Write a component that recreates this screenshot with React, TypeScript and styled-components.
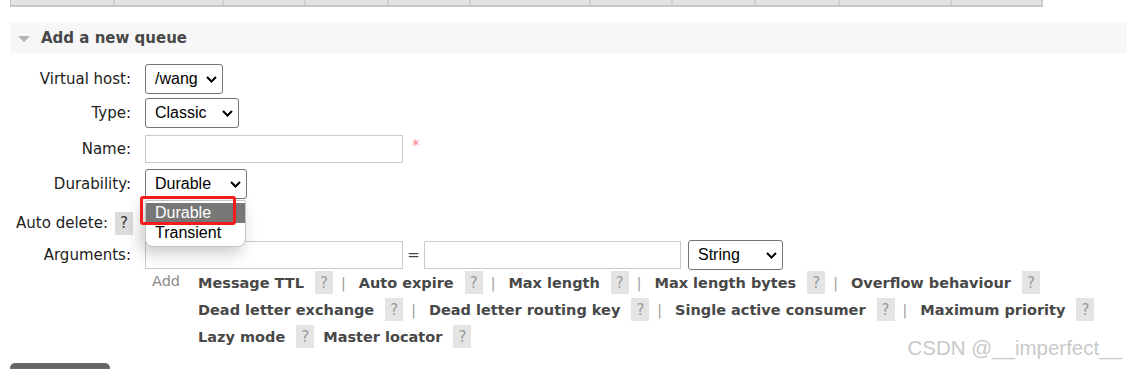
import React from 'react';
import styled, { createGlobalStyle } from 'styled-components';

const GlobalStyle = createGlobalStyle`
  html, body {
    margin: 0;
    padding: 0;
    background: #fff;
  }
  body {
    font-family: "DejaVu Sans", Verdana, sans-serif;
    color: #222;
    overflow: hidden;
  }
`;

const Page = styled.div`
  position: relative;
  width: 1127px;
  height: 369px;
  overflow: hidden;
`;

const TableStub = styled.div`
  display: flex;
  margin-left: 10px;
  height: 5px;
  width: fit-content;
  border-bottom: 2px solid #c8c8c8;
  border-left: 1px solid #c8c8c8;
`;

const StubCell = styled.div<{ $w: number }>`
  width: ${(p) => p.$w}px;
  background: #e2e2e2;
  border-right: 2px solid #cfcfcf;
  box-sizing: border-box;
`;

const SectionHeader = styled.div`
  display: flex;
  align-items: center;
  margin: 15px 0 0 10px;
  height: 31px;
  padding-left: 8px;
  background: #f7f7f7;
  gap: 11px;
`;

const Triangle = styled.span`
  width: 0;
  height: 0;
  border-left: 6px solid transparent;
  border-right: 6px solid transparent;
  border-top: 6px solid #b4b4b4;
  margin-top: 2px;
`;

const Title = styled.h2`
  margin: 0;
  font-size: 15px;
  font-weight: bold;
  color: #484848;
`;

const Row = styled.div<{ $mt: number }>`
  display: flex;
  align-items: center;
  height: 30px;
  margin-top: ${(p) => p.$mt}px;
`;

const Label = styled.label<{ $overhang?: number }>`
  display: flex;
  align-items: center;
  justify-content: flex-end;
  gap: 7px;
  width: ${(p) => 131 + (p.$overhang ?? 0)}px;
  margin-right: ${(p) => 14 - (p.$overhang ?? 0)}px;
  font-size: 15px;
  color: #222;
  white-space: nowrap;
`;

const SelectBox = styled.div<{ $w: number }>`
  display: flex;
  align-items: center;
  justify-content: space-between;
  box-sizing: border-box;
  width: ${(p) => p.$w}px;
  height: 30px;
  padding: 0 5px 0 9px;
  border: 1px solid #767676;
  border-radius: 3px;
  background: #fff;
  font-family: "Liberation Sans", Arial, sans-serif;
  font-size: 16px;
  color: #000;
`;

const TextInput = styled.div<{ $w: number }>`
  box-sizing: border-box;
  width: ${(p) => p.$w}px;
  height: 28px;
  border: 1px solid #cbcbcb;
  background: #fff;
`;

const Required = styled.span`
  align-self: flex-start;
  margin: 3px 0 0 9px;
  font-size: 15px;
  color: #ff8a8a;
`;

const Equals = styled.span`
  width: 21px;
  text-align: center;
  font-size: 15px;
  color: #444;
`;

const Help = styled.span<{ $dark?: boolean }>`
  display: inline-flex;
  align-items: center;
  justify-content: center;
  width: 18px;
  height: 23px;
  background: ${(p) => (p.$dark ? '#dcdcdc' : '#e4e4e4')};
  color: ${(p) => (p.$dark ? '#333' : '#9a9a9a')};
  font-size: 15px;
  font-weight: normal;
`;

const DropWrap = styled.div`
  position: relative;
`;

const Popup = styled.div`
  position: absolute;
  top: 31px;
  left: 0;
  width: 101px;
  box-sizing: border-box;
  padding: 2px 0 3px;
  background: #fff;
  border: 1px solid #c4c4c4;
  border-radius: 2px 2px 8px 8px;
  box-shadow: -4px 6px 16px rgba(0, 0, 0, 0.22);
  font-family: "Liberation Sans", Arial, sans-serif;
  font-size: 16px;
  z-index: 2;
`;

const Option = styled.div<{ $active?: boolean }>`
  height: 20px;
  line-height: 20px;
  padding-left: 9px;
  background: ${(p) => (p.$active ? '#777' : 'transparent')};
  color: ${(p) => (p.$active ? '#fff' : '#000')};
`;

const Marker = styled.div`
  position: absolute;
  top: 27px;
  left: -5px;
  width: 96px;
  height: 29px;
  box-sizing: border-box;
  border: 3px solid #f21c1c;
  border-radius: 3px;
  z-index: 3;
`;

const AddArea = styled.div`
  display: flex;
  margin-top: -1px;
`;

const AddCell = styled.div`
  width: 198px;
  padding-left: 152px;
  box-sizing: border-box;
`;

const AddLabel = styled.span`
  display: block;
  height: 27px;
  line-height: 25px;
  font-size: 14.5px;
  color: #8a8a8a;
`;

const LinkLines = styled.div`
  display: flex;
  flex-direction: column;
`;

const LinkLine = styled.div`
  display: flex;
  align-items: center;
  height: 27px;
`;

const ArgLink = styled.span`
  font-size: 14.5px;
  font-weight: bold;
  color: #484848;
  margin-right: 11px;
  white-space: nowrap;
`;

const Sep = styled.span`
  margin: 0 13px 0 8px;
  font-size: 14px;
  color: #9a9a9a;
`;

const Gap = styled.span<{ $w?: number }>`
  width: ${(p) => p.$w ?? 9}px;
`;

const BottomButton = styled.div`
  margin: 13px 0 0 10px;
  width: 100px;
  height: 12px;
  background: #666;
  border-radius: 5px 5px 0 0;
`;

const Watermark = styled.div`
  position: absolute;
  right: 5px;
  top: 336px;
  font-family: "Liberation Sans", Arial, sans-serif;
  font-size: 20.5px;
  color: #c9c9c9;
  white-space: nowrap;
`;

const Chevron: React.FC = () => (
  <svg width="11" height="7" viewBox="0 0 11 7">
    <path d="M1 1 L5.5 5.5 L10 1" fill="none" stroke="#000" strokeWidth="2" />
  </svg>
);

const Select: React.FC<{ width: number; value: string }> = ({ width, value }) => (
  <SelectBox $w={width}>
    <span>{value}</span>
    <Chevron />
  </SelectBox>
);

const stubWidths = [104, 109, 82, 83, 82, 120, 82, 83, 84, 112, 91];

const argLines: { items: string[]; separated: boolean }[] = [
  {
    items: ['Message TTL', 'Auto expire', 'Max length', 'Max length bytes', 'Overflow behaviour'],
    separated: true,
  },
  {
    items: ['Dead letter exchange', 'Dead letter routing key', 'Single active consumer', 'Maximum priority'],
    separated: true,
  },
  { items: ['Lazy mode', 'Master locator'], separated: false },
];

export default function App() {
  return (
    <Page>
      <GlobalStyle />
      <TableStub>
        {stubWidths.map((w, i) => (
          <StubCell key={i} $w={w} />
        ))}
      </TableStub>

      <SectionHeader>
        <Triangle />
        <Title>Add a new queue</Title>
      </SectionHeader>

      <Row $mt={11}>
        <Label>Virtual host:</Label>
        <Select width={78} value="/wang" />
      </Row>
      <Row $mt={4}>
        <Label>Type:</Label>
        <Select width={94} value="Classic" />
      </Row>
      <Row $mt={6}>
        <Label>Name:</Label>
        <TextInput $w={258} />
        <Required>*</Required>
      </Row>
      <Row $mt={5}>
        <Label>Durability:</Label>
        <DropWrap>
          <Select width={102} value="Durable" />
          <Popup>
            <Option $active>Durable</Option>
            <Option>Transient</Option>
          </Popup>
          <Marker />
        </DropWrap>
      </Row>
      <Row $mt={9}>
        <Label $overhang={2}>
          Auto delete: <Help $dark>?</Help>
        </Label>
      </Row>
      <Row $mt={2}>
        <Label>Arguments:</Label>
        <TextInput $w={258} />
        <Equals>=</Equals>
        <TextInput $w={257} />
        <Gap $w={7} />
        <Select width={95} value="String" />
      </Row>

      <AddArea>
        <AddCell>
          <AddLabel>Add</AddLabel>
        </AddCell>
        <LinkLines>
          {argLines.map((line, li) => (
            <LinkLine key={li}>
              {line.items.map((item, i) => (
                <React.Fragment key={item}>
                  <ArgLink>{item}</ArgLink>
                  <Help>?</Help>
                  {i < line.items.length - 1 &&
                    (line.separated ? <Sep>|</Sep> : <Gap />)}
                </React.Fragment>
              ))}
            </LinkLine>
          ))}
        </LinkLines>
      </AddArea>

      <BottomButton />
      <Watermark>CSDN @__imperfect__</Watermark>
    </Page>
  );
}
